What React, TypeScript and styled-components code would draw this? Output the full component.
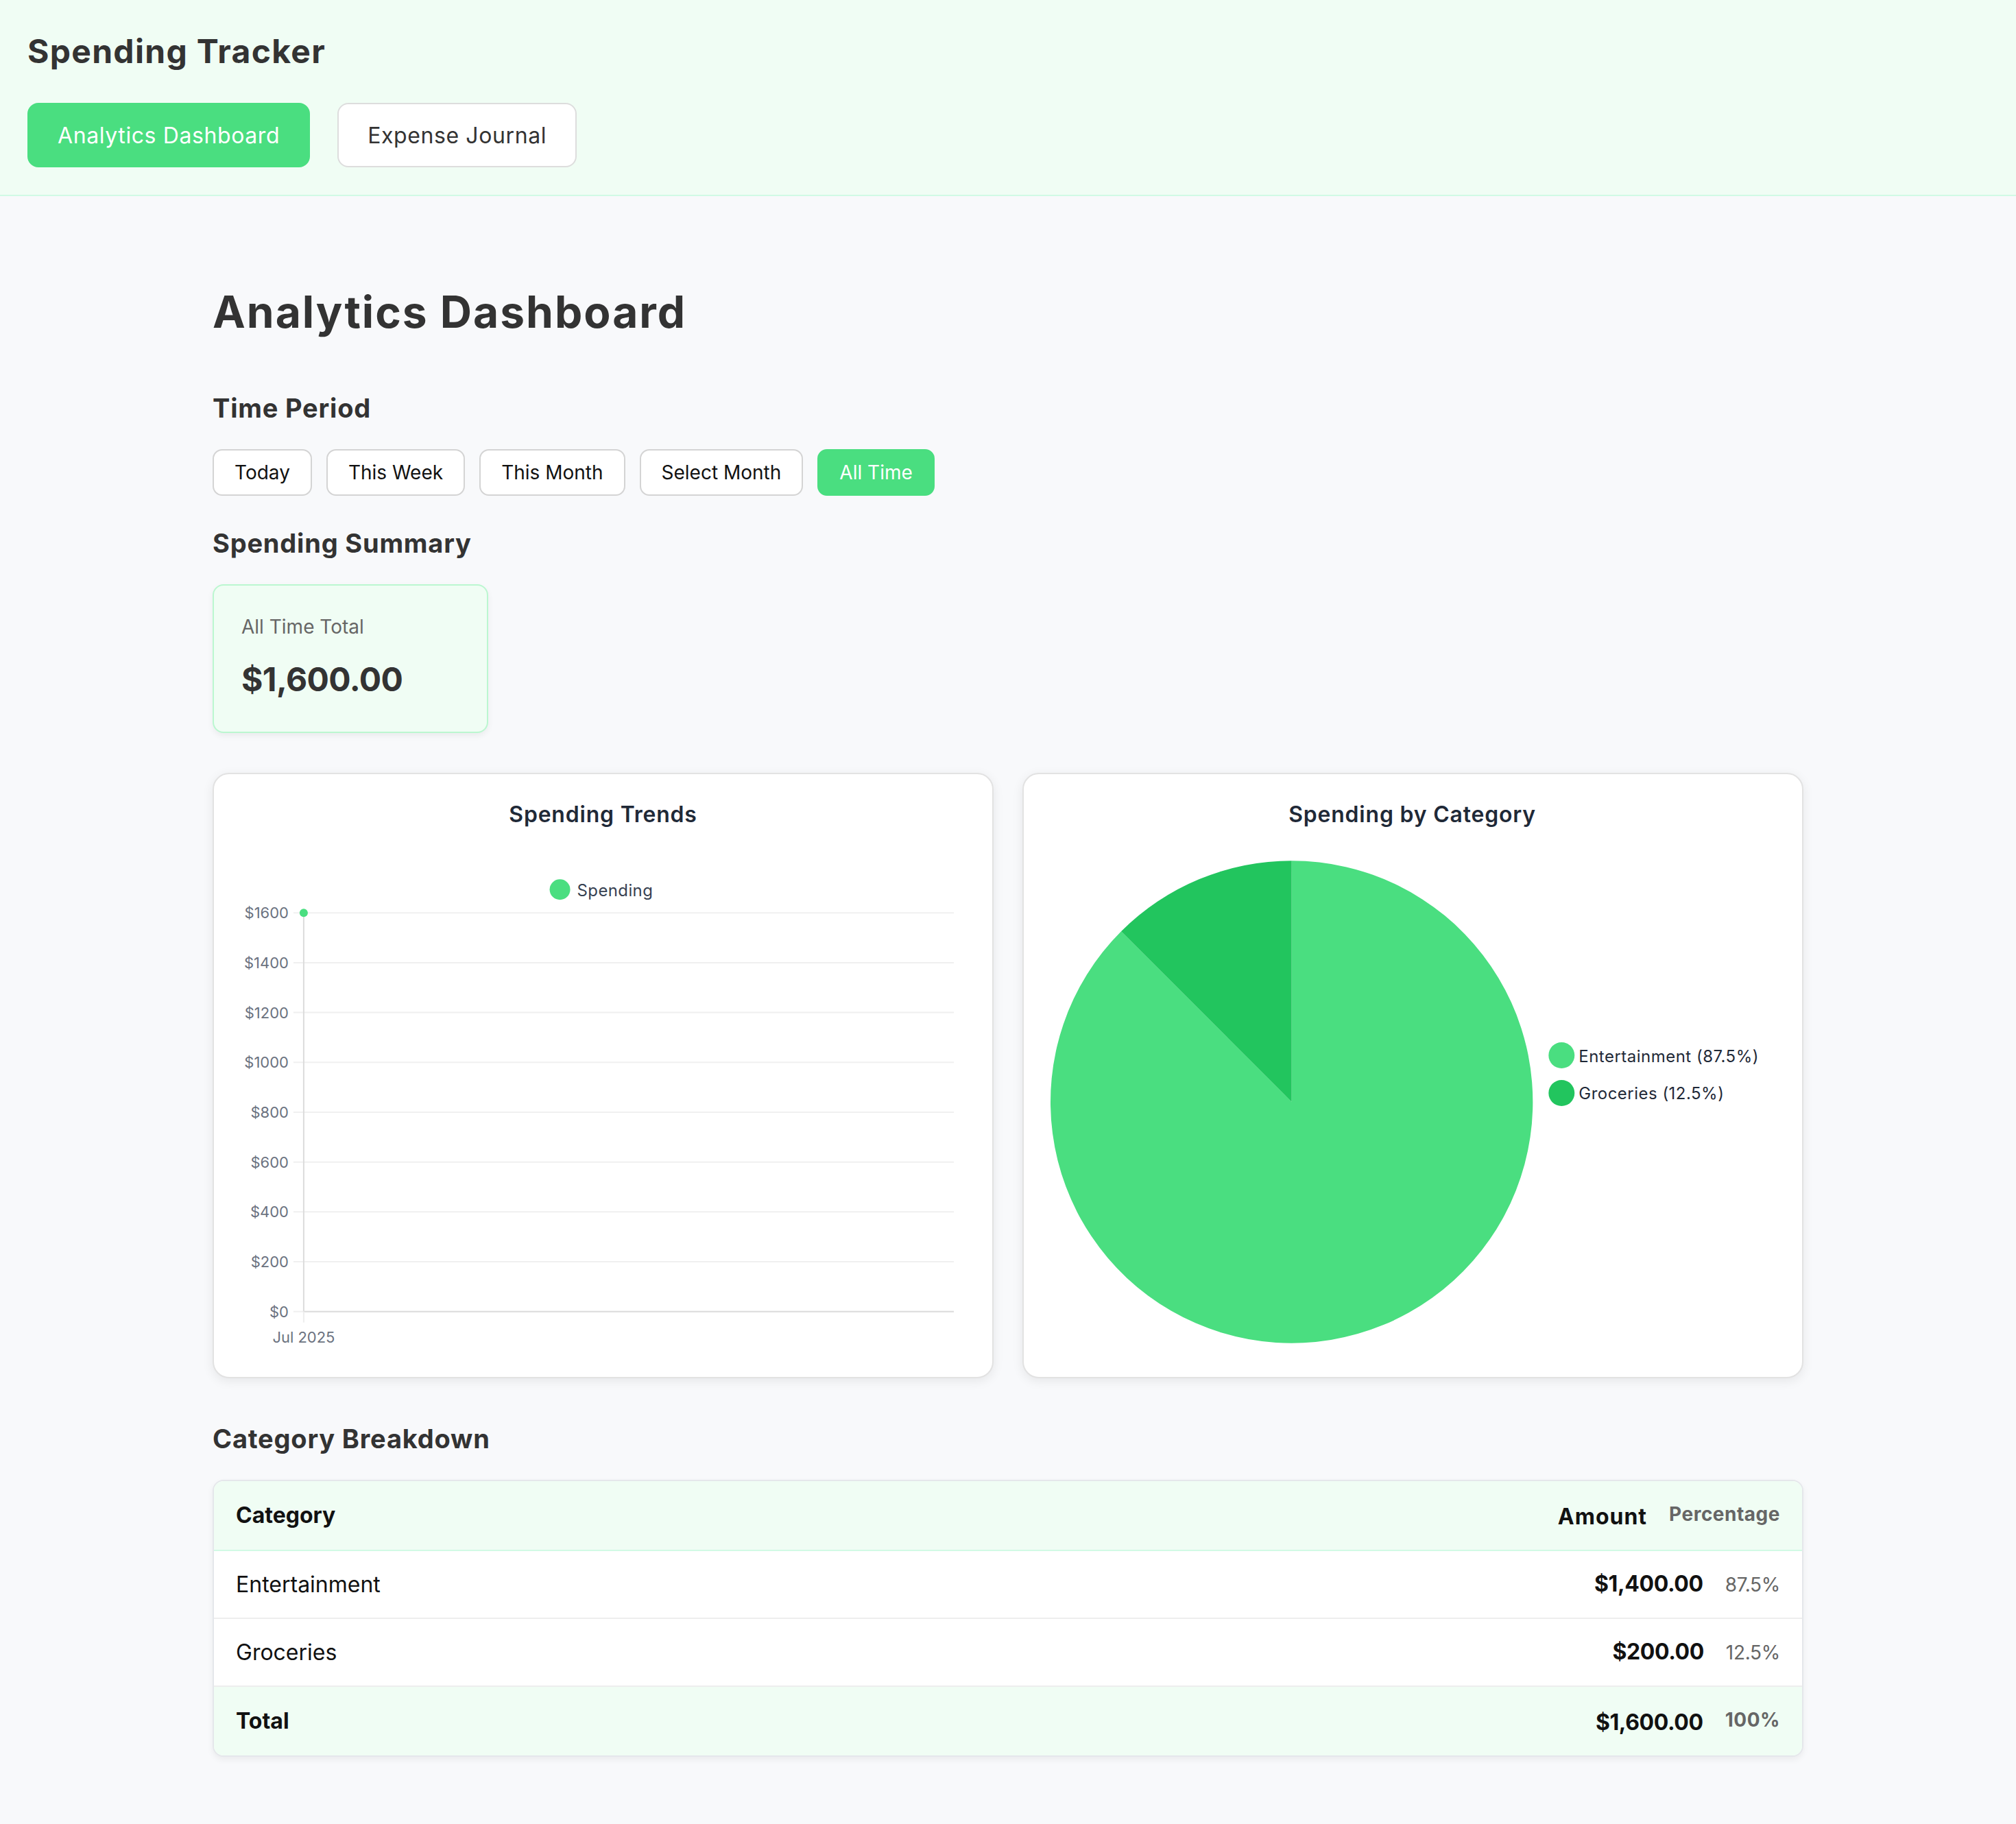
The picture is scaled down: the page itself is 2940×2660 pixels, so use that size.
import React from "react";
import styled, { createGlobalStyle } from "styled-components";

const FONT = `"Inter", "Noto Sans", "Liberation Sans", sans-serif`;

const colors = {
  green: "#4ade80",
  greenDark: "#22c55e",
  mint: "#f0fdf4",
  mintBorder: "#d1fae5",
  text: "#333333",
  muted: "#666666",
  slate: "#1f2937",
  tick: "#6b7280",
};

const GlobalStyle = createGlobalStyle`
  * {
    box-sizing: border-box;
  }
  body {
    margin: 0;
    background: #f8f9fb;
    font-family: ${FONT};
    color: ${colors.text};
  }
`;

const Header = styled.header`
  background: ${colors.mint};
  border-bottom: 2px solid ${colors.mintBorder};
  padding: 40px 40px 40px;
`;

const AppTitle = styled.h1`
  margin: 0 0 40px;
  font-size: 48px;
  line-height: 70px;
  font-weight: 700;
  letter-spacing: 1.3px;
  color: ${colors.text};
`;

const NavRow = styled.nav`
  display: flex;
  gap: 40px;
`;

const NavButton = styled.button<{ $active?: boolean }>`
  height: 94px;
  padding: 0 42px;
  border-radius: 16px;
  font-family: inherit;
  font-size: 32px;
  font-weight: 400;
  letter-spacing: 0.6px;
  border: 2px solid ${(p) => (p.$active ? colors.green : "#dddddd")};
  background: ${(p) => (p.$active ? colors.green : "#ffffff")};
  color: ${(p) => (p.$active ? "#ffffff" : colors.text)};
  cursor: pointer;
`;

const Main = styled.main`
  max-width: 2320px;
  margin: 0 auto;
  padding: 129px 0 101px;
`;

const PageTitle = styled.h2`
  margin: 0 0 76px;
  font-size: 64px;
  line-height: 80px;
  font-weight: 700;
  letter-spacing: 2px;
  color: ${colors.text};
`;

const Section = styled.section<{ $gap: number }>`
  margin-bottom: ${(p) => p.$gap}px;
`;

const SectionTitle = styled.h3`
  margin: 0 0 36px;
  font-size: 38px;
  line-height: 48px;
  font-weight: 700;
  letter-spacing: 0.8px;
  color: ${colors.text};
`;

const PeriodRow = styled.div`
  display: flex;
  gap: 21px;
`;

const PeriodButton = styled.button<{ $active?: boolean }>`
  height: 68px;
  padding: 0 30px;
  border-radius: 14px;
  font-family: inherit;
  font-size: 28px;
  border: 2px solid ${(p) => (p.$active ? colors.green : "#d4d4d4")};
  background: ${(p) => (p.$active ? colors.green : "#ffffff")};
  color: ${(p) => (p.$active ? "#ffffff" : "#111111")};
  cursor: pointer;
`;

const SummaryCard = styled.div`
  width: 402px;
  padding: 40px 40px 45px;
  background: ${colors.mint};
  border: 2px solid #bbf7d0;
  border-radius: 16px;
  box-shadow: 0 4px 10px rgba(0, 0, 0, 0.06);
`;

const SummaryLabel = styled.div`
  font-size: 28px;
  line-height: 40px;
  color: ${colors.muted};
  margin-bottom: 26px;
`;

const SummaryValue = styled.div`
  font-size: 48px;
  line-height: 62px;
  font-weight: 700;
  letter-spacing: -0.6px;
  color: ${colors.text};
`;

const ChartsGrid = styled.div`
  display: grid;
  grid-template-columns: 1fr 1fr;
  gap: 42px;
  margin-bottom: 64px;
`;

const ChartCard = styled.div`
  height: 883px;
  padding: 32px;
  background: #ffffff;
  border: 2px solid #e2e2e2;
  border-radius: 24px;
  box-shadow: 0 4px 16px rgba(0, 0, 0, 0.08);
`;

const ChartSvg = styled.svg`
  display: block;
  width: 100%;
  height: 815px;
  font-family: ${FONT};
`;

const TableCard = styled.div`
  background: #ffffff;
  border: 2px solid #e5e7eb;
  border-radius: 16px;
  overflow: hidden;
  box-shadow: 0 4px 10px rgba(0, 0, 0, 0.06);
`;

const Table = styled.table`
  width: 100%;
  border-collapse: collapse;
`;

const Row = styled.tr<{ $tinted?: boolean }>`
  background: ${(p) => (p.$tinted ? colors.mint : "#ffffff")};
`;

const Cell = styled.td<{ $right?: boolean; $bold?: boolean; $head?: boolean; $last?: boolean }>`
  padding: 24px 32px;
  font-size: 32px;
  line-height: 48px;
  color: #111111;
  text-align: ${(p) => (p.$right ? "right" : "left")};
  font-weight: ${(p) => (p.$bold ? 700 : 400)};
  border-bottom: ${(p) =>
    p.$last ? "none" : `2px solid ${p.$head ? colors.mintBorder : "#eeeeee"}`};
`;

const HeadLabel = styled.span`
  letter-spacing: 1px;
`;

const Amount = styled.span`
  font-weight: 700;
  letter-spacing: -0.4px;
`;

const Percent = styled.span<{ $bold?: boolean }>`
  margin-left: 32px;
  font-size: 28px;
  color: ${colors.muted};
  font-weight: ${(p) => (p.$bold ? 700 : 400)};
  letter-spacing: ${(p) => (p.$bold ? "0.5px" : "-0.3px")};
  vertical-align: ${(p) => (p.$bold ? "5px" : "baseline")};
`;

const periods = ["Today", "This Week", "This Month", "Select Month", "All Time"];

const rows = [
  { name: "Entertainment", amount: "$1,400.00", pct: "87.5%" },
  { name: "Groceries", amount: "$200.00", pct: "12.5%" },
];

const yTicks = [1600, 1400, 1200, 1000, 800, 600, 400, 200, 0];
const TOP = 170;
const STEP = 72.75;

const TrendsChart = () => (
  <ChartSvg viewBox="0 0 1072 815">
    <text x={536} y={26} textAnchor="middle" dominantBaseline="central" fontSize={32} fontWeight={600} letterSpacing={0.8} fill={colors.slate}>
      Spending Trends
    </text>
    <circle cx={473} cy={136} r={15} fill={colors.green} />
    <text x={498} y={137} dominantBaseline="central" fontSize={24} letterSpacing={0.4} fill="#374151">
      Spending
    </text>
    {yTicks.map((v, i) => {
      const y = TOP + i * STEP;
      return (
        <g key={v}>
          <line x1={84} x2={1048} y1={y} y2={y} stroke="#f0f0f0" strokeWidth={2} />
          <text x={77} y={y} textAnchor="end" dominantBaseline="central" fontSize={22} fill={colors.tick}>
            ${v}
          </text>
        </g>
      );
    })}
    <line x1={99} x2={1048} y1={TOP + 8 * STEP} y2={TOP + 8 * STEP} stroke="#dcdcdc" strokeWidth={2} />
    <line x1={99} x2={99} y1={TOP} y2={TOP + 8 * STEP} stroke="#dcdcdc" strokeWidth={2} />
    <line x1={99} x2={99} y1={TOP + 8 * STEP} y2={TOP + 8 * STEP + 16} stroke="#eeeeee" strokeWidth={2} />
    <text x={99} y={789} textAnchor="middle" dominantBaseline="central" fontSize={22} fill={colors.tick}>
      Jul 2025
    </text>
    <circle cx={99} cy={TOP} r={6} fill={colors.green} />
  </ChartSvg>
);

const CategoryChart = () => (
  <ChartSvg viewBox="0 0 1072 815">
    <text x={535} y={26} textAnchor="middle" dominantBaseline="central" fontSize={32} fontWeight={600} letterSpacing={0.8} fill={colors.slate}>
      Spending by Category
    </text>
    <path d="M359 446 L359 94 A352 352 0 1 1 110.1 197.1 Z" fill={colors.green} />
    <path d="M359 446 L110.1 197.1 A352 352 0 0 1 359 94 Z" fill={colors.greenDark} />
    <circle cx={753} cy={378} r={19} fill={colors.green} />
    <text x={778} y={379} dominantBaseline="central" fontSize={24} letterSpacing={0.5} fill={colors.slate}>
      Entertainment (87.5%)
    </text>
    <circle cx={753} cy={433} r={19} fill={colors.greenDark} />
    <text x={778} y={434} dominantBaseline="central" fontSize={24} letterSpacing={0.5} fill={colors.slate}>
      Groceries (12.5%)
    </text>
  </ChartSvg>
);

const App = () => {
  return (
    <>
      <GlobalStyle />
      <Header>
        <AppTitle>Spending Tracker</AppTitle>
        <NavRow>
          <NavButton $active>Analytics Dashboard</NavButton>
          <NavButton>Expense Journal</NavButton>
        </NavRow>
      </Header>
      <Main>
        <PageTitle>Analytics Dashboard</PageTitle>

        <Section $gap={45}>
          <SectionTitle>Time Period</SectionTitle>
          <PeriodRow>
            {periods.map((p) => (
              <PeriodButton key={p} $active={p === "All Time"}>
                {p}
              </PeriodButton>
            ))}
          </PeriodRow>
        </Section>

        <Section $gap={58}>
          <SectionTitle>Spending Summary</SectionTitle>
          <SummaryCard>
            <SummaryLabel>All Time Total</SummaryLabel>
            <SummaryValue>$1,600.00</SummaryValue>
          </SummaryCard>
        </Section>

        <ChartsGrid>
          <ChartCard>
            <TrendsChart />
          </ChartCard>
          <ChartCard>
            <CategoryChart />
          </ChartCard>
        </ChartsGrid>

        <Section $gap={0}>
          <SectionTitle>Category Breakdown</SectionTitle>
          <TableCard>
            <Table>
              <tbody>
                <Row $tinted>
                  <Cell as="th" $bold $head>
                    Category
                  </Cell>
                  <Cell as="th" $right $bold $head>
                    <HeadLabel>Amount</HeadLabel>
                    <Percent $bold>Percentage</Percent>
                  </Cell>
                </Row>
                {rows.map((r) => (
                  <Row key={r.name}>
                    <Cell>{r.name}</Cell>
                    <Cell $right>
                      <Amount>{r.amount}</Amount>
                      <Percent>{r.pct}</Percent>
                    </Cell>
                  </Row>
                ))}
                <Row $tinted>
                  <Cell $bold $last>
                    Total
                  </Cell>
                  <Cell $right $bold $last>
                    <Amount>$1,600.00</Amount>
                    <Percent $bold>100%</Percent>
                  </Cell>
                </Row>
              </tbody>
            </Table>
          </TableCard>
        </Section>
      </Main>
    </>
  );
};

export default App;
